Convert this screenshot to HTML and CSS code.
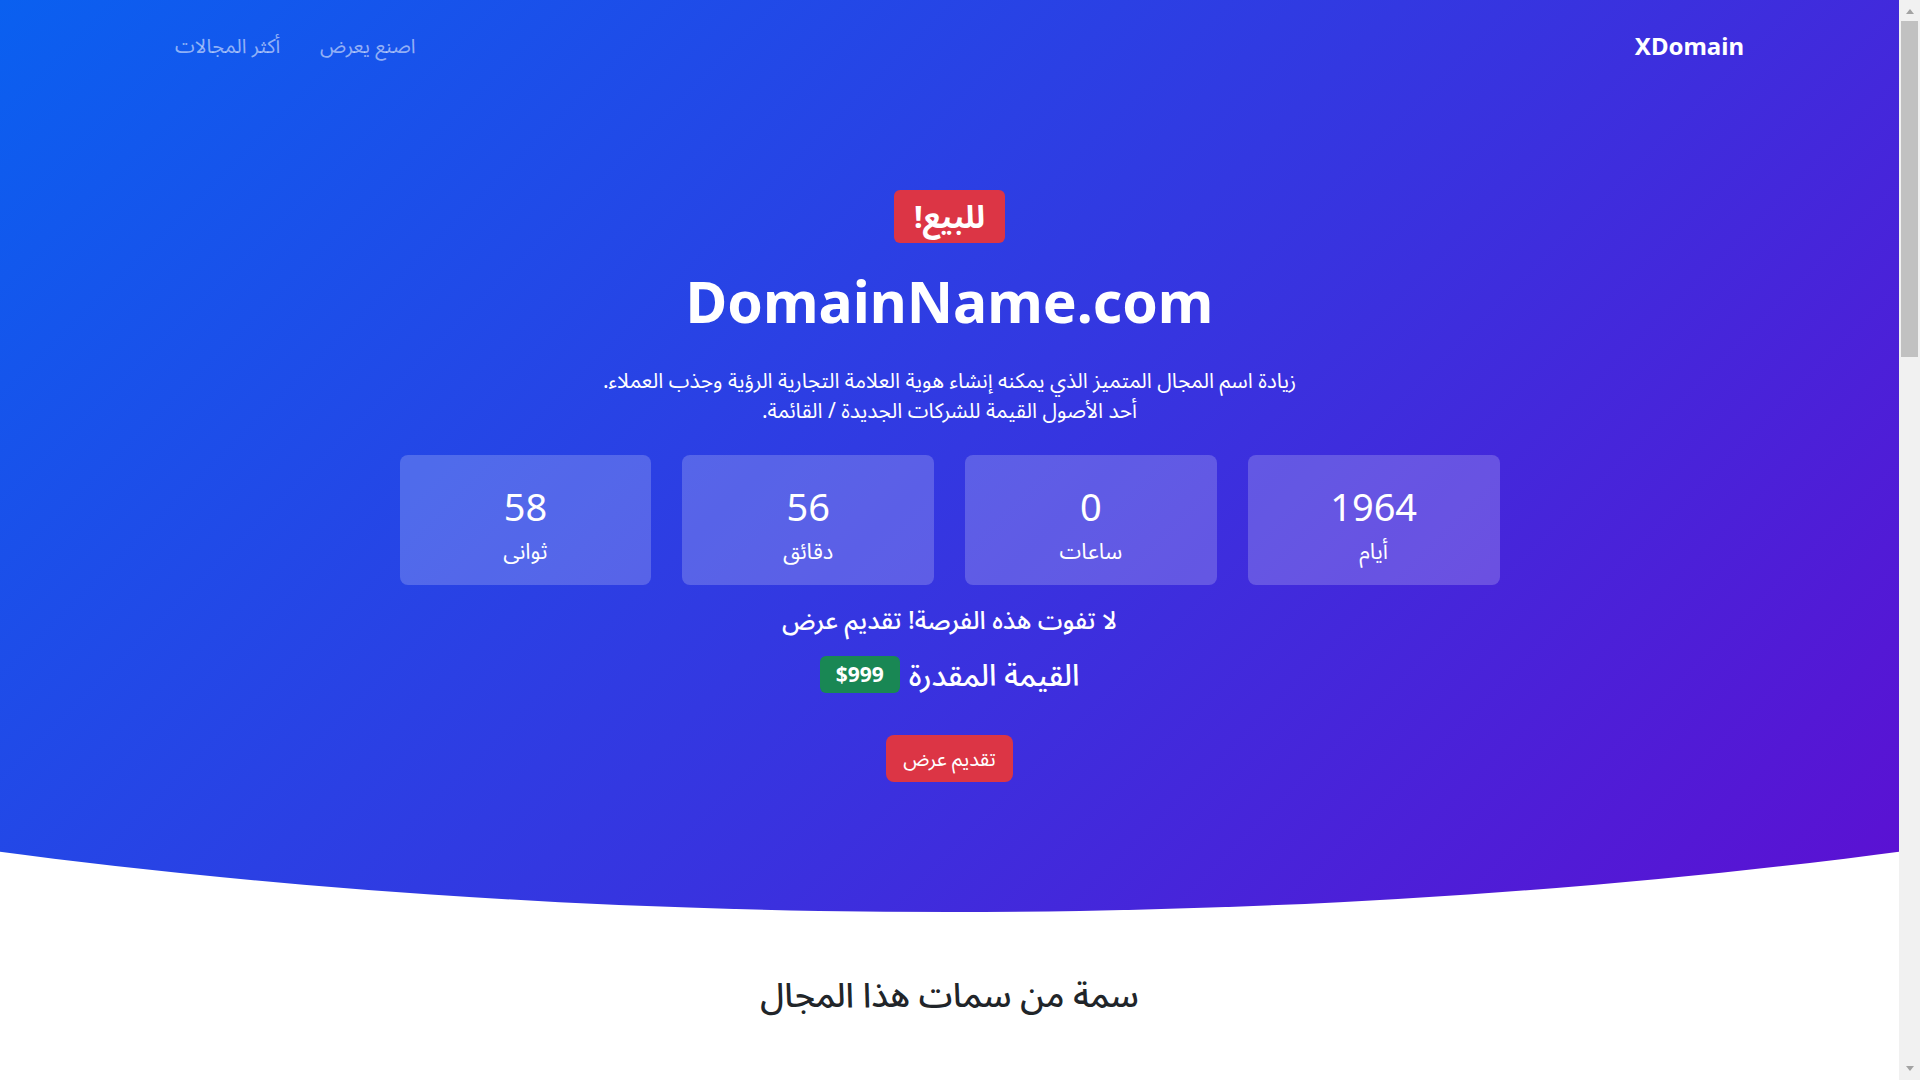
FILE: index.html
```html
<!DOCTYPE html>
<html lang="ar" dir="rtl">
<head>
<meta charset="utf-8">
<title>XDomain - DomainName.com للبيع</title>
<link rel="stylesheet" href="styles.css">
</head>
<body>
<header class="hero">
  <nav class="nav">
    <a class="brand" href="#">XDomain</a>
    <ul class="nav-links">
      <li><a href="#offer">اصنع يعرض</a></li>
      <li><a href="#more">أكثر المجالات</a></li>
    </ul>
  </nav>
  <div class="hero-body">
    <span class="sale-badge">للبيع!</span>
    <h1 class="domain">DomainName.com</h1>
    <p class="lead">زيادة اسم المجال المتميز الذي يمكنه إنشاء هوية العلامة التجارية الرؤية وجذب العملاء.<br>أحد الأصول القيمة للشركات الجديدة / القائمة.</p>
    <div class="countdown">
      <div class="cd-box"><span class="cd-num">1964</span><span class="cd-label">أيام</span></div>
      <div class="cd-box"><span class="cd-num">0</span><span class="cd-label">ساعات</span></div>
      <div class="cd-box"><span class="cd-num">56</span><span class="cd-label">دقائق</span></div>
      <div class="cd-box"><span class="cd-num">58</span><span class="cd-label">ثوانى</span></div>
    </div>
    <p class="tagline">لا تفوت هذه الفرصة! تقديم عرض</p>
    <p class="value">القيمة المقدرة <span class="price">$999</span></p>
    <a class="btn-offer" href="#offer">تقديم عرض</a>
  </div>
</header>

<main>
  <section class="features">
    <h2 class="section-title">سمة من سمات هذا المجال</h2>
    <div class="feature-grid">
      <div class="feature"><h3>اسم قصير وسهل التذكر</h3><p>اسم مجال بسيط يسهل على العملاء كتابته وتذكره.</p></div>
      <div class="feature"><h3>امتداد ‎.com‎ الموثوق</h3><p>الامتداد الأكثر شهرة وثقة على الإنترنت.</p></div>
      <div class="feature"><h3>مثالي للعلامات التجارية</h3><p>مناسب لبناء هوية قوية لشركتك الجديدة أو القائمة.</p></div>
      <div class="feature"><h3>تحسين محركات البحث</h3><p>يساعد على الظهور في نتائج البحث وجذب الزوار.</p></div>
      <div class="feature"><h3>نقل آمن وسريع</h3><p>عملية نقل ملكية آمنة ومضمونة خلال وقت قصير.</p></div>
      <div class="feature"><h3>ملكية كاملة</h3><p>تحصل على كامل الحقوق في اسم المجال بعد الشراء.</p></div>
    </div>
  </section>

  <section class="offer" id="offer">
    <h2 class="section-title">تقديم عرض</h2>
    <form class="offer-form">
      <label>الاسم<input type="text"></label>
      <label>البريد الإلكتروني<input type="email"></label>
      <label>قيمة العرض ($)<input type="number"></label>
      <label>رسالة<textarea rows="6"></textarea></label>
      <button type="button" class="btn-submit">إرسال العرض</button>
    </form>
  </section>

  <section class="more" id="more">
    <h2 class="section-title">أكثر المجالات</h2>
    <ul class="more-list">
      <li>BrandName.com</li>
      <li>ShopOnline.net</li>
      <li>TechStart.io</li>
      <li>CloudHub.org</li>
    </ul>
  </section>
</main>

<footer class="footer">© 2024 XDomain. جميع الحقوق محفوظة.</footer>

<div class="scrollbar" aria-hidden="true">
  <div class="sb-btn sb-up"></div>
  <div class="sb-track"><div class="sb-thumb"></div></div>
  <div class="sb-btn sb-down"></div>
</div>
</body>
</html>
```
FILE: styles.css
```css
* { box-sizing: border-box; }
html { margin: 0; padding: 0; }
body {
  margin: 0 21px 0 0;
  padding: 0;
  font-family: "Noto Sans", "Noto Sans Arabic", "DejaVu Sans", sans-serif;
  color: #212529;
  background: #fff;
  font-size: 16px;
  line-height: 1.5;
}

/* window scrollbar, as in the screenshot */
.scrollbar {
  position: fixed;
  top: 0;
  right: 0;
  width: 21px;
  height: 100vh;
  background: #f1f1f1;
  display: flex;
  flex-direction: column;
  z-index: 10;
}
.sb-btn {
  height: 21px;
  flex: none;
  display: flex;
  justify-content: center;
}
.sb-up { align-items: flex-start; padding-top: 9px; }
.sb-down { align-items: flex-end; padding-bottom: 9px; }
.sb-up::before {
  content: "";
  border-left: 4.5px solid transparent;
  border-right: 4.5px solid transparent;
  border-bottom: 5px solid #a3a3a3;
}
.sb-down::before {
  content: "";
  border-left: 4.5px solid transparent;
  border-right: 4.5px solid transparent;
  border-top: 5px solid #a3a3a3;
}
.sb-track { flex: 1; padding: 0 2px; }
.sb-thumb { height: 336px; background: #c1c1c1; }

.hero {
  background: linear-gradient(135deg, #0a60f0 0%, #5c10d2 100%);
  min-height: 912px;
  clip-path: ellipse(140% 100% at 50% 0);
  color: #fff;
}
.nav {
  display: flex;
  align-items: center;
  padding: 21px 155px 0;
  height: 70px;
}
.brand {
  color: #fff;
  font-weight: 700;
  font-size: 24px;
  text-decoration: none;
}
.nav-links {
  list-style: none;
  display: flex;
  margin: 0 auto 0 0;
  padding: 0;
}
.nav-links a {
  display: block;
  padding: 0 20px;
  color: rgba(255,255,255,.55);
  text-decoration: none;
  font-size: 20px;
}

.hero-body {
  display: flex;
  flex-direction: column;
  align-items: center;
  text-align: center;
  padding-top: 120px;
}
.sale-badge {
  display: inline-block;
  background: #dc3545;
  color: #fff;
  font-weight: 700;
  font-size: 31px;
  line-height: 1;
  padding: 11px 20px;
  border-radius: 6px;
}
.domain {
  margin: 24px 0 0;
  font-size: 57px;
  font-weight: 700;
  line-height: 1.2;
}
.lead {
  margin: 30px 0 0;
  font-size: 21px;
  line-height: 30px;
}
.countdown {
  display: grid;
  grid-template-columns: repeat(4, 1fr);
  gap: 31px;
  width: 1100px;
  margin-top: 30px;
}
.cd-box {
  background: rgba(255,255,255,.2);
  border-radius: 8px;
  height: 130px;
  padding-top: 28px;
  display: flex;
  flex-direction: column;
  align-items: center;
}
.cd-num { font-size: 38px; line-height: 46px; }
.cd-label { font-size: 22px; line-height: 33px; margin-top: 5px; }
.tagline {
  margin: 19px 0 0;
  font-size: 25px;
  font-weight: 500;
  line-height: 30px;
}
.value {
  margin: 22px 0 0;
  font-size: 30px;
  font-weight: 500;
  line-height: 1.2;
  display: flex;
  align-items: center;
  gap: 9px;
}
.price {
  display: inline-block;
  background: #198754;
  color: #fff;
  font-size: 21px;
  font-weight: 700;
  line-height: 1;
  padding: 8px 16px;
  border-radius: 6px;
}
.btn-offer {
  margin-top: 42px;
  display: inline-block;
  background: #dc3545;
  color: #fff;
  text-decoration: none;
  font-size: 20px;
  line-height: 31px;
  padding: 8px 17px;
  border-radius: 8px;
}

.section-title {
  text-align: center;
  font-size: 34px;
  font-weight: 500;
  line-height: 1.2;
  margin: 0 0 48px;
}
.features { padding: 62px 0 100px; }
.features .section-title { margin-bottom: 110px; }
.feature-grid {
  display: grid;
  grid-template-columns: repeat(3, 1fr);
  gap: 24px;
  width: 1100px;
  margin: 0 auto;
}
.feature {
  border: 1px solid #dee2e6;
  border-radius: 8px;
  padding: 32px;
  min-height: 280px;
}
.feature h3 { margin: 0 0 12px; font-size: 22px; font-weight: 600; }
.feature p { margin: 0; color: #6c757d; }

.offer { padding: 100px 0; background: #f8f9fa; }
.offer-form {
  width: 640px;
  margin: 0 auto;
  display: flex;
  flex-direction: column;
  gap: 20px;
}
.offer-form label { display: flex; flex-direction: column; gap: 8px; font-weight: 500; }
.offer-form input, .offer-form textarea {
  font: inherit;
  padding: 10px 12px;
  border: 1px solid #ced4da;
  border-radius: 6px;
  background: #fff;
}
.btn-submit {
  align-self: flex-start;
  font: inherit;
  font-size: 18px;
  background: #dc3545;
  color: #fff;
  border: 0;
  padding: 10px 24px;
  border-radius: 8px;
}
.more { padding: 100px 0 160px; }
.more-list {
  list-style: none;
  margin: 0 auto;
  padding: 0;
  width: 1100px;
  display: grid;
  grid-template-columns: repeat(4, 1fr);
  gap: 24px;
}
.more-list li {
  padding: 60px 0;
  text-align: center;
  border-radius: 8px;
  background: #eef1ff;
  font-weight: 600;
}
.footer {
  background: #212529;
  color: #adb5bd;
  text-align: center;
  padding: 48px 0;
}
```
